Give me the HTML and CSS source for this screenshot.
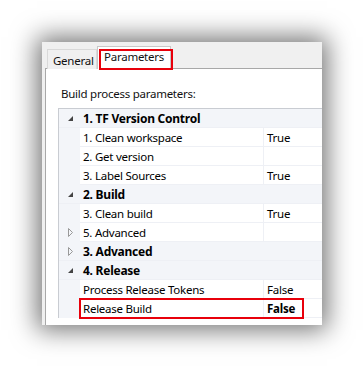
FILE: index.html
```html
<!DOCTYPE html>
<html>
<head>
<meta charset="utf-8">
<link rel="stylesheet" href="styles.css">
</head>
<body>
<div class="window">
  <div class="tabs">
    <div class="tab">General</div>
    <div class="tab active">Parameters<span class="mark tab-mark"></span></div>
  </div>
  <div class="panel">
    <div class="label">Build process parameters:</div>
    <div class="grid">
      <div class="row cat"><span class="glyph"><svg width="7" height="7" viewBox="0 0 7 7"><path d="M6 1 L6 6 L1 6 Z" fill="#444"/></svg></span><span class="cname">1. TF Version Control</span></div>
      <div class="row item"><span class="indent"></span><span class="name">1. Clean workspace</span><span class="val">True</span></div>
      <div class="row item"><span class="indent"></span><span class="name">2. Get version</span><span class="val"></span></div>
      <div class="row item"><span class="indent"></span><span class="name">3. Label Sources</span><span class="val">True</span></div>
      <div class="row cat"><span class="glyph"><svg width="7" height="7" viewBox="0 0 7 7"><path d="M6 1 L6 6 L1 6 Z" fill="#444"/></svg></span><span class="cname">2. Build</span></div>
      <div class="row item"><span class="indent"></span><span class="name">3. Clean build</span><span class="val">True</span></div>
      <div class="row item"><span class="indent glyph"><svg width="7" height="9" viewBox="0 0 7 9"><path d="M1.5 0.5 L5.5 4.5 L1.5 8.5 Z" fill="none" stroke="#999"/></svg></span><span class="name">5. Advanced</span><span class="val"></span></div>
      <div class="row cat"><span class="glyph"><svg width="7" height="9" viewBox="0 0 7 9"><path d="M1.5 0.5 L5.5 4.5 L1.5 8.5 Z" fill="none" stroke="#999"/></svg></span><span class="cname">3. Advanced</span></div>
      <div class="row cat"><span class="glyph"><svg width="7" height="7" viewBox="0 0 7 7"><path d="M6 1 L6 6 L1 6 Z" fill="#444"/></svg></span><span class="cname">4. Release</span></div>
      <div class="row item"><span class="indent"></span><span class="name">Process Release Tokens</span><span class="val">False</span></div>
      <div class="row item"><span class="indent"></span><span class="name">Release Build</span><span class="val bold">False</span><span class="mark row-mark"></span></div>
    </div>
  </div>
</div>
</body>
</html>
```

FILE: styles.css
```css
html, body {
  margin: 0;
  padding: 0;
  background: #ffffff;
  overflow: hidden;
}
body {
  width: 364px;
  height: 368px;
  padding: 42px 0 0 42px;
  box-sizing: border-box;
  font-family: "Noto Sans", "Open Sans", sans-serif;
  font-size: 11.5px;
  letter-spacing: -0.25px;
  color: #000;
}
.window {
  width: 280px;
  height: 283px;
  background: #f0f0f0;
  box-shadow: 0 0 24px 5px rgba(0, 0, 0, 0.55);
  padding-top: 4px;
  box-sizing: border-box;
  overflow: hidden;
}
.tabs {
  display: flex;
  align-items: flex-end;
  padding-left: 5px;
  height: 23px;
  margin-bottom: -1px;
  position: relative;
  z-index: 2;
}
.tab {
  height: 20px;
  box-sizing: border-box;
  border: 1px solid #d9d9d9;
  border-bottom: none;
  background: #f0f0f0;
  padding: 3px 0 0 5px;
  width: 50px;
  line-height: 16px;
  color: #111;
}
.tab.active {
  height: 23px;
  width: 74px;
  background: #ffffff;
  border-color: #c8c8c8;
  padding: 2px 0 0 6px;
  position: relative;
}
.mark {
  position: absolute;
  border: 2px solid #e8000b;
  box-sizing: border-box;
}
.tab-mark {
  left: 1px;
  top: 2px;
  width: 74px;
  height: 21px;
}
.panel {
  margin-left: 3px;
  height: 260px;
  background: #ffffff;
  border-left: 1px solid #a8a8a8;
  border-top: 1px solid #a8a8a8;
  padding: 17px 0 0 12px;
  box-sizing: border-box;
}
.label {
  padding-left: 3px;
  line-height: 16px;
  height: 22px;
  color: #111;
}
.grid {
  border-top: 1px solid #c9ccd2;
  border-left: 1px solid #c9ccd2;
  width: 300px;
  position: relative;
}
.row {
  display: flex;
  height: 19px;
  box-sizing: border-box;
  line-height: 19px;
  position: relative;
}
.cat {
  background: #f3f5f9;
  border-bottom: 1px solid #eef0f5;
  font-weight: bold;
  font-size: 12px;
}
.glyph {
  width: 21px;
  display: flex;
  align-items: center;
  justify-content: center;
  padding-left: 1px;
  box-sizing: border-box;
}
.cname {
  padding-left: 3px;
}
.item .indent {
  width: 21px;
  background: #f3f5f9;
  flex: none;
}
.item .name {
  width: 184px;
  flex: none;
  background: #fff;
  border-bottom: 1px solid #eef0f5;
  border-right: 1px solid #eef0f5;
  padding-left: 3px;
  box-sizing: border-box;
}
.item .val {
  flex: 1;
  background: #fff;
  border-bottom: 1px solid #eef0f5;
  padding-left: 3px;
}
.bold {
  font-weight: bold;
}
.row-mark {
  left: 20px;
  top: -1px;
  width: 225px;
  height: 21px;
}
```
